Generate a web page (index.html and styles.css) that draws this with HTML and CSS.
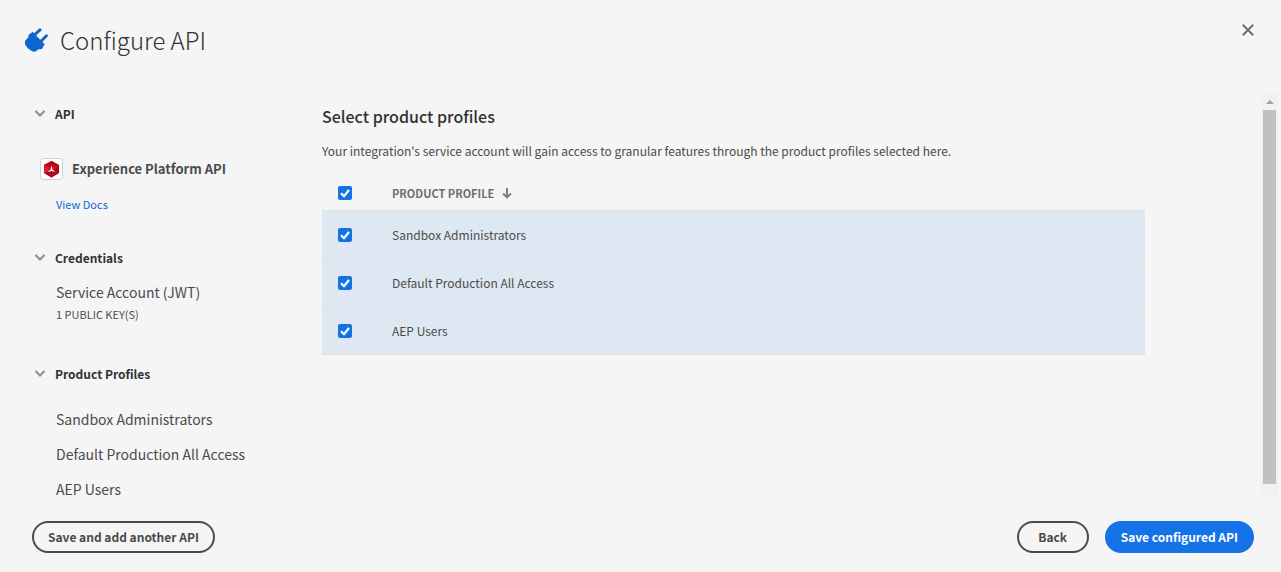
FILE: index.html
```html
<!DOCTYPE html>
<html lang="en">
<head>
<meta charset="utf-8">
<title>Configure API</title>
<link rel="stylesheet" href="styles.css">
</head>
<body>
<header class="page-header">
  <svg class="plug" viewBox="0 0 24 24" aria-hidden="true">
    <path d="M8.300 3.600L20.800 16.500L19 18.500V19.800L17.500 21.200H14.500L11.500 23.500H8.500L4 20.500L1 16.500V13L4.500 9V7L6 5.500H7Z"/>
    <path class="prong" d="M10.500 6.800L16 1.800M17 13.200L22.400 7.800"/>
  </svg>
  <h1 class="page-title">Configure API</h1>
  <button class="close" type="button" aria-label="Close">
    <svg viewBox="0 0 12 12" aria-hidden="true"><path d="M.8.800L11.200 11.200M11.200.8L.8 11.200"/></svg>
  </button>
</header>

<div class="workspace">
  <nav class="sidebar" aria-label="Summary">
    <section class="group">
      <h2 class="group-title"><button class="toggle" type="button" aria-expanded="true"><svg class="chevron" viewBox="0 0 12 8" aria-hidden="true"><path d="M1.500 1L6 5.500L10.500 1"/></svg>API</button></h2>
      <div class="product">
        <svg class="product-icon" viewBox="0 0 24 24" aria-hidden="true">
          <rect x=".5" y="1.500" width="22" height="21" rx="3" fill="#fff" stroke="#cfcfcf"/>
          <path d="M11.500 4L19 8V16L11.500 20.500L4 16V8Z" fill="#d3122b"/>
          <path d="M11.500 4L19 8L11.500 10.500L4 8Z" fill="#b5061d"/>
          <path d="M4 8L9 13.500L4 16Z" fill="#e51b37"/>
          <path d="M19 8V16L14 13.500Z" fill="#94091c"/>
          <path d="M11.500 13.500L19 16L11.500 20.500L4 16Z" fill="#a60b20"/>
          <path d="M11.500 8L12.300 12.500L15.500 15L11.500 14L7.500 15L10.700 12.500Z" fill="#fff"/>
        </svg>
        <span class="product-name">Experience Platform API</span>
      </div>
      <a class="docs" href="#docs">View Docs</a>
    </section>
    <section class="group credentials">
      <h2 class="group-title"><button class="toggle" type="button" aria-expanded="true"><svg class="chevron" viewBox="0 0 12 8" aria-hidden="true"><path d="M1.500 1L6 5.500L10.500 1"/></svg>Credentials</button></h2>
      <p class="account">Service Account (JWT)</p>
      <p class="keys">1 PUBLIC KEY(S)</p>
    </section>
    <section class="group profiles">
      <h2 class="group-title"><button class="toggle" type="button" aria-expanded="true"><svg class="chevron" viewBox="0 0 12 8" aria-hidden="true"><path d="M1.500 1L6 5.500L10.500 1"/></svg>Product Profiles</button></h2>
      <ul class="profile-list">
        <li>Sandbox Administrators</li>
        <li>Default Production All Access</li>
        <li>AEP Users</li>
      </ul>
    </section>
  </nav>

  <main class="content">
    <h2 class="content-title">Select product profiles</h2>
    <p class="intro">Your integration's service account will gain access to granular features through the product profiles selected here.</p>
    <table class="table">
      <thead>
        <tr>
          <th class="check-cell"><input class="check" type="checkbox" aria-label="Select all" checked></th>
          <th><button class="sort" type="button">PRODUCT PROFILE<svg viewBox="0 0 10 12" aria-hidden="true"><path d="M5 1V10M1 6.500L5 10.300L9 6.500"/></svg></button></th>
        </tr>
      </thead>
      <tbody>
        <tr><td class="check-cell"><input class="check" type="checkbox" id="p1" checked></td><td><label for="p1">Sandbox Administrators</label></td></tr>
        <tr><td class="check-cell"><input class="check" type="checkbox" id="p2" checked></td><td><label for="p2">Default Production All Access</label></td></tr>
        <tr><td class="check-cell"><input class="check" type="checkbox" id="p3" checked></td><td><label for="p3">AEP Users</label></td></tr>
      </tbody>
    </table>
  </main>

  <div class="scrollbar" aria-hidden="true">
    <svg viewBox="0 0 8 4"><path d="M4 0L8 4H0Z"/></svg>
    <div class="thumb"></div>
  </div>
</div>

<footer class="actions">
  <button class="button" type="button">Save and add another API</button>
  <button class="button push" type="button">Back</button>
  <button class="button primary" type="button">Save configured API</button>
</footer>
</body>
</html>
```

FILE: styles.css
```css
* {
  box-sizing: border-box;
}

body {
  display: flex;
  flex-direction: column;
  min-height: 100vh;
  margin: 0;
  background: #f5f5f5;
  color: #4b4b4b;
  font: 12px/20px "Noto Sans CJK SC", "Noto Sans", sans-serif;
}

h1, h2, p, ul {
  margin: 0;
  padding: 0;
}

button {
  margin: 0;
  padding: 0;
  border: 0;
  background: none;
  color: inherit;
  font: inherit;
  cursor: pointer;
}

svg {
  display: block;
  flex: none;
}

.page-header {
  display: flex;
  align-items: flex-start;
  height: 93px;
  padding: 20px 27px 0 24px;
}

.plug {
  width: 24px;
  height: 24px;
  margin-top: 8px;
  fill: #0d66d0;
}

.prong {
  fill: none;
  stroke: #0d66d0;
  stroke-width: 3;
  stroke-linecap: round;
}

.page-title {
  margin-left: 12px;
  color: #323232;
  font-size: 24px;
  font-weight: 300;
  line-height: 40px;
}

.close {
  margin: 4px 0 0 auto;
}

.close svg {
  width: 12px;
  height: 12px;
  fill: none;
  stroke: #6e6e6e;
  stroke-width: 2;
}

.workspace {
  display: flex;
  flex: 1;
}

.sidebar {
  flex: none;
  width: 322px;
  padding: 11px 16px 0 34px;
}

.group-title {
  color: #323232;
  font-size: 12px;
  line-height: 20px;
}

.toggle {
  display: flex;
  align-items: center;
  gap: 9px;
  font-weight: 700;
}

.chevron {
  width: 12px;
  height: 8px;
  fill: none;
  stroke: #8e8e8e;
  stroke-width: 2;
}

.product {
  display: flex;
  align-items: center;
  gap: 8px;
  margin: 33px 0 13px 6px;
}

.product-icon {
  width: 24px;
  height: 24px;
}

.product-name {
  font-size: 13px;
  font-weight: 700;
}

.docs {
  display: block;
  margin-left: 22px;
  color: #0d66d0;
  font-size: 11px;
  text-decoration: none;
}

.credentials {
  margin-top: 34px;
}

.account {
  margin: 14px 0 2px 22px;
  font-size: 14px;
}

.keys {
  margin-left: 22px;
  font-size: 11px;
}

.profiles {
  margin-top: 40px;
}

.profile-list {
  display: flex;
  flex-direction: column;
  gap: 15px;
  margin: 25px 0 0 22px;
  font-size: 14px;
  list-style: none;
}

.content {
  flex: 1;
  padding: 13px 116px 0 0;
}

.content-title {
  color: #323232;
  font-size: 16px;
  font-weight: 500;
  line-height: 20px;
}

.intro {
  margin: 15px 0 14px;
}

.table {
  width: 100%;
  border-collapse: separate;
  border-spacing: 0;
  text-align: left;
}

.table th,
.table td {
  height: 48px;
  padding: 0;
  border-bottom: 1px solid #e1e1e1;
}

.table th {
  height: 36px;
}

.table td {
  background: #dee8f2;
}

.table .check-cell {
  width: 70px;
  padding-left: 16px;
}

.check {
  display: block;
  width: 14px;
  height: 14px;
  margin: 0;
  appearance: none;
  border-radius: 2px;
  background: #1473e6 url("data:image/svg+xml,%3Csvg xmlns='http://www.w3.org/2000/svg' viewBox='0 0 14 14'%3E%3Cpath d='M3 7.200L6 10.200L11 4' fill='none' stroke='white' stroke-width='2.200'/%3E%3C/svg%3E");
}

.sort {
  display: flex;
  align-items: center;
  gap: 8px;
  color: #6e6e6e;
  font-size: 11px;
  font-weight: 700;
}

.sort svg {
  width: 10px;
  height: 12px;
  fill: none;
  stroke: #808080;
  stroke-width: 2;
}

.scrollbar {
  display: flex;
  flex-direction: column;
  align-items: center;
  gap: 6px;
  width: 17px;
  margin: 0 3px 2px 0;
  padding: 7px 0 13px;
  background: #f1f1f1;
}

.scrollbar svg {
  width: 8px;
  height: 4px;
  fill: #a3a3a3;
}

.thumb {
  flex: 1;
  width: 13px;
  background: #c1c1c1;
}

.actions {
  display: flex;
  gap: 16px;
  padding: 22px 27px 19px 32px;
}

.button {
  height: 32px;
  padding: 0 14px;
  border: 2px solid #4b4b4b;
  border-radius: 16px;
  font-weight: 700;
  line-height: 28px;
}

.push {
  min-width: 72px;
  margin-left: auto;
}

.primary {
  border-color: #1473e6;
  background: #1473e6;
  color: #fff;
}
```
